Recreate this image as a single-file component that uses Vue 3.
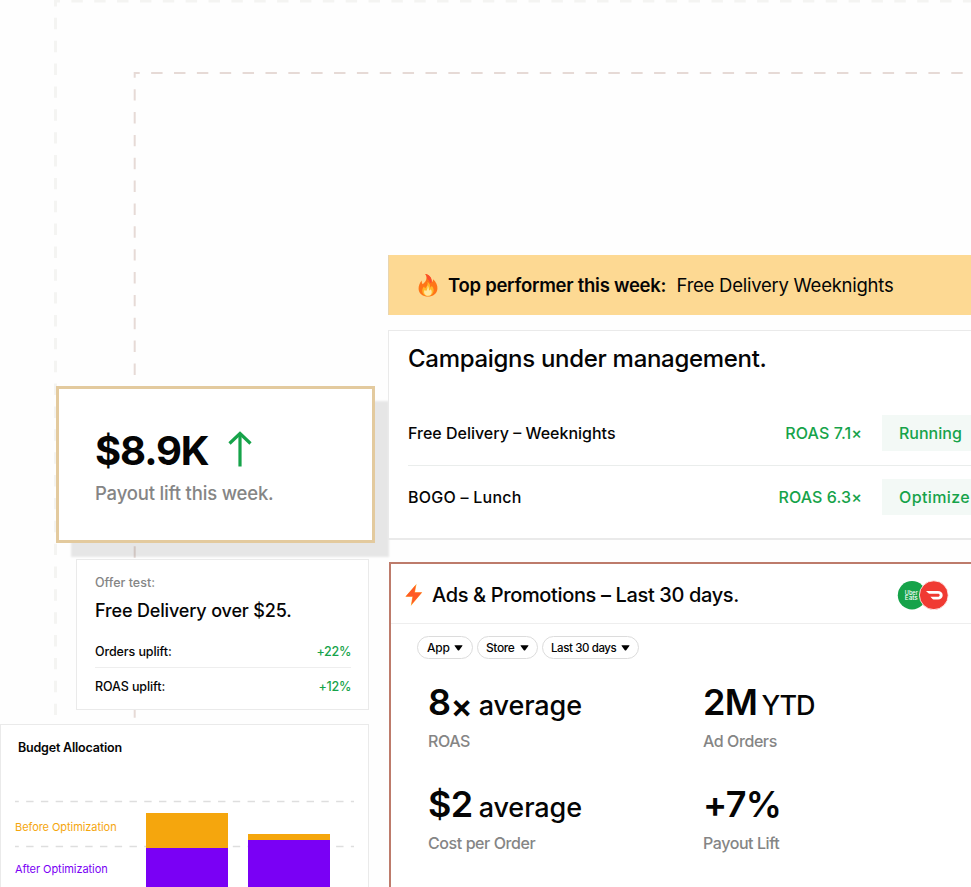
<template>
  <div class="page">
    <svg class="frames" width="971" height="887" viewBox="0 0 971 887" fill="none">
      <g stroke="#F4F4F2" stroke-width="3" stroke-dasharray="11.43 11.43" stroke-dashoffset="5.5">
        <path d="M55.5 0.5V887" />
        <path d="M54 1H971" />
      </g>
      <g stroke="#E6DAD6" stroke-width="2" stroke-dasharray="11.43 11.43" stroke-dashoffset="5.7">
        <path d="M134.7 72V887" />
        <path d="M134 73H971" />
      </g>
    </svg>

    <div class="left-column">
      <section class="payout-card">
        <div class="payout-row">
          <span class="payout-value">$8.9K</span>
          <svg class="payout-arrow" width="24" height="36" viewBox="0 0 24 36" fill="none" stroke="#16A34A" stroke-width="3.2">
            <path d="M12 35.5V3" />
            <path d="M1.5 12.5L12 2.5L22.5 12.5" />
          </svg>
        </div>
        <div class="payout-label">Payout lift this week.</div>
      </section>

      <section class="offer-card">
        <div class="offer-label">Offer test:</div>
        <div class="offer-title">Free Delivery over $25.</div>
        <div v-for="item in uplifts" :key="item.label" class="uplift-row">
          <span class="uplift-label">{{ item.label }}</span>
          <span class="uplift-value">{{ item.value }}</span>
        </div>
      </section>

      <section class="budget-card">
        <div class="budget-title">Budget Allocation</div>
        <div class="chart">
          <svg class="chart-lines" width="339" height="86" viewBox="0 0 339 86" stroke="#DEDEDE" stroke-width="1.3" stroke-dasharray="7.4 7.36" stroke-dashoffset="3.6">
            <path d="M0 1.5H339" />
            <path d="M0 46.5H339" />
          </svg>
          <div class="legend">
            <span class="legend-before">Before Optimization</span>
            <span class="legend-after">After Optimization</span>
          </div>
          <div class="bars">
            <div v-for="(bar, i) in bars" :key="i" class="bar" :style="{ height: bar.total + 'px' }">
              <div class="bar-before" :style="{ height: bar.before + 'px' }"></div>
              <div class="bar-after"></div>
            </div>
          </div>
        </div>
      </section>
    </div>

    <div class="right-column">
      <section class="banner">
        <svg class="flame" width="20" height="24" viewBox="0 0 20 24">
          <path fill="#FF7518" d="M7.2 1C10.8 1.4 14 4.4 13.8 9.2C14.7 8.6 15 7.5 15 6.2C18 8.6 19.8 12.4 19.4 16C18.9 20.7 15 23.6 10 23.6C4.9 23.6 .9 20.6 .6 16C.4 12.6 1.8 9.7 3.7 7.4C3.7 9 4 10.3 4.7 11.2C7.6 9.2 10 5.2 7.2 1Z" />
          <path fill="#FA4E2C" d="M7.2 1C10.8 1.4 14 4.4 13.8 9.2C13 10.2 12 10 11.7 9C11.4 7 10.3 6.2 9.2 6.2C9.3 4.2 8.8 2.5 7.2 1Z" />
          <path fill="#FFB72B" d="M9.5 8.8C12 11 12.4 13 12.1 14.5C13.1 14.2 13.5 13.5 13.7 12.8C16 15 16.2 18 14.8 20.3C13.6 22.3 12 23.2 9.9 23.2C6.7 23.2 4.3 20.9 4.3 17.8C4.3 15.9 5 14.4 6.1 13.4C6.3 14.3 6.6 14.8 7.2 15.2C9.2 13.5 10 11.5 9.5 8.8Z" />
          <path fill="#FFE7A0" d="M9.6 12.4C11 14.2 10.9 16.2 11.1 17.4C11.9 17.3 12.4 16.9 12.8 16.2C14.2 18 14 20.4 12.8 21.7C11.4 23.2 8.4 23.2 7 21.6C5.6 20 5.9 17.8 6.9 16.8C7.1 17.5 7.5 17.9 8.1 18C9.3 16.5 9.8 14.7 9.6 12.4Z" />
        </svg>
        <strong class="banner-title">Top performer this week:</strong>
        <span class="banner-text">Free Delivery Weeknights</span>
      </section>

      <section class="campaigns">
        <h2 class="campaigns-title">Campaigns under management.</h2>
        <div v-for="item in campaigns" :key="item.name" class="campaign-row">
          <span class="campaign-name" :class="item.key">{{ item.name }}</span>
          <span class="campaign-roas">ROAS {{ item.roas }}<span class="times">×</span></span>
          <span class="campaign-status" :class="'status-' + item.key">{{ item.status }}</span>
        </div>
      </section>

      <section class="ads">
        <header class="ads-header">
          <svg class="bolt" width="18" height="24" viewBox="0 0 18 24">
            <path fill="#FFB03A" d="M11.6 .8L.3 13.7H7.3L5.8 23L17.3 9.3H10Z" />
            <path fill="#FF5A26" d="M10.7 2L.7 13.5H7.9L6.5 21.6L16.9 9.6H9.5Z" />
          </svg>
          <h2 class="ads-title">Ads &amp; Promotions – Last 30 days.</h2>
          <svg class="brands" width="52" height="30" viewBox="0 0 52 30">
            <circle cx="15" cy="15.2" r="14.2" fill="#16A34A" />
            <text x="7.8" y="14.6" class="brand-text" textLength="13" lengthAdjust="spacingAndGlyphs">Uber</text>
            <text x="7.8" y="20.4" class="brand-text" textLength="13" lengthAdjust="spacingAndGlyphs">Eats</text>
            <circle cx="36.8" cy="15.2" r="14.4" fill="#F03A32" stroke="#FFF" stroke-width="0.8" />
            <path fill="#FFF" d="M29 11H40.7C43.9 11 45.7 12.9 45.7 15.2C45.7 17.7 43.7 19.5 41.1 19.5H36.5C36.1 19.5 35.7 19.3 35.5 19L33.4 16.7H41C42 16.7 42.7 16.1 42.7 15.2C42.7 14.4 42 13.8 41 13.8H32.7C32.2 13.8 31.7 13.6 31.4 13.3Z" />
          </svg>
        </header>
        <div class="filters">
          <button v-for="item in filters" :key="item.label" class="filter" :class="item.key">
            {{ item.label }}
            <svg class="caret" width="9" height="6" viewBox="0 0 9 6"><path d="M1 .2H8Q9 .2 8.3 1.1L5.2 5.2Q4.5 6 3.8 5.2L.7 1.1Q0 .2 1 .2Z" /></svg>
          </button>
        </div>
        <div class="stats">
          <div v-for="item in stats" :key="item.label" class="stat">
            <div class="stat-value">
              <span class="stat-number">{{ item.value }}<span v-if="item.times" class="stat-times">×</span></span>
              <span v-if="item.unit" class="stat-unit" :class="item.unit.toLowerCase()">{{ item.unit }}</span>
            </div>
            <div class="stat-label">{{ item.label }}</div>
          </div>
        </div>
      </section>
    </div>
  </div>
</template>

<script setup>
const uplifts = [
  { label: 'Orders uplift:', value: '+22%' },
  { label: 'ROAS uplift:', value: '+12%' }
]

const bars = [
  { total: 74, before: 34.5 },
  { total: 53, before: 6 }
]

const campaigns = [
  { key: 'weeknights', name: 'Free Delivery – Weeknights', roas: '7.1', status: 'Running' },
  { key: 'lunch', name: 'BOGO – Lunch', roas: '6.3', status: 'Optimize' }
]

const filters = [
  { key: 'app', label: 'App' },
  { key: 'store', label: 'Store' },
  { key: 'days', label: 'Last 30 days' }
]

const stats = [
  { value: '8', times: true, unit: 'average', label: 'ROAS' },
  { value: '2M', unit: 'YTD', label: 'Ad Orders' },
  { value: '$2', unit: 'average', label: 'Cost per Order' },
  { value: '+7%', label: 'Payout Lift' }
]
</script>

<style>
body { background: #FEFEFE; overflow: hidden; }
</style>

<style scoped>
.page { position: relative; display: grid; grid-template-columns: 388px 1fr; width: 100%; height: 887px; overflow: hidden; font-family: 'Inter', sans-serif; font-weight: 500; color: #050505; }
.page * { box-sizing: border-box; }
h2 { margin: 0; font-weight: 500; }
span, h2, strong { white-space: nowrap; }
svg { flex-shrink: 0; }
.frames { position: absolute; left: 0; top: 0; }

.left-column, .right-column { position: relative; display: flex; flex-direction: column; min-width: 0; }
.left-column { padding-top: 386px; align-items: flex-start; }
.right-column { padding-top: 255px; }

.payout-card { width: 319px; height: 157px; margin-left: 56px; padding: 36px 0 0 36px; background: #FFF; border: 3px solid #E3CA9E; box-shadow: 14px 14px 2px -0.5px rgba(0, 0, 0, 0.095); }
.payout-row { display: flex; align-items: flex-start; height: 50px; }
.payout-value { width: 133px; line-height: 51px; font-size: 40px; font-weight: 650; letter-spacing: -1.1px; }
.payout-arrow { margin-top: 6px; }
.payout-label { margin-top: 6px; line-height: 24px; font-size: 18.5px; color: #858585; letter-spacing: -0.18px; }

.offer-card { width: 293px; height: 151px; margin: 16px 0 0 76px; padding: 14px 17px 0 18px; background: #FFF; border: 1px solid #EAEAEA; }
.offer-label { line-height: 18px; font-size: 12.5px; color: #858585; }
.offer-title { margin: 6px 0 12px; line-height: 26px; font-size: 18px; letter-spacing: -0.15px; }
.uplift-row { display: flex; justify-content: space-between; height: 31px; line-height: 31px; font-size: 12.5px; letter-spacing: -0.1px; }
.uplift-row + .uplift-row { height: 38px; border-top: 1px solid #EEEEEE; line-height: 37px; }
.uplift-value { color: #16A34A; letter-spacing: -0.3px; }

.budget-card { width: 369px; height: 170px; margin-top: 14px; padding: 14px 14px 0; background: #FFF; border: 1px solid #EAEAEA; }
.budget-title { padding-left: 3px; line-height: 18px; font-size: 12.5px; font-weight: 600; letter-spacing: -0.2px; }
.chart { position: relative; display: flex; height: 87px; margin-top: 43px; }
.chart-lines { position: absolute; left: 0; top: 0; }
.legend { display: flex; flex-direction: column; gap: 26px; width: 130.5px; padding-top: 19px; line-height: 16px; font-size: 11px; font-weight: 400; letter-spacing: -0.06px; }
.legend-before { color: #F5A60D; }
.legend-after { color: #7A00F5; }
.bars { position: relative; display: flex; align-items: flex-end; gap: 19.5px; }
.bar { display: flex; flex-direction: column; width: 82.5px; }
.bar-before { background: #F5A60D; }
.bar-after { flex: 1; background: #7A00F5; }

.banner { display: flex; align-items: center; height: 60px; padding-left: 29px; border-left: 1px solid #E8D5B0; background: #FDD993; font-size: 18.5px; }
.banner-title { width: 228.5px; margin-left: 10px; font-weight: 600; letter-spacing: -0.27px; }
.banner-text { font-weight: 400; letter-spacing: -0.25px; }

.campaigns { height: 210px; margin-top: 15px; padding: 13px 0 0 19px; background: #FFF; border: solid #EAEAEA; border-width: 1px 0 2px 1px; }
.campaigns-title { height: 58px; line-height: 30px; font-size: 24px; letter-spacing: -0.3px; }
.campaign-row { display: flex; align-items: center; height: 63px; padding-bottom: 1px; font-size: 16px; }
.campaign-row + .campaign-row { height: 64px; border-top: 1px solid #EAEDEC; }
.campaign-name { flex: 1; }
.lunch { letter-spacing: 0.25px; }
.campaign-roas { color: #16A34A; letter-spacing: 0.1px; }
.times { font-size: 16px; }
.campaign-status { width: 120px; height: 36px; margin: 0 -31px 0 20px; padding-left: 17px; background: #F3F9F6; line-height: 37px; color: #16A34A; }
.status-lunch { letter-spacing: 0.4px; }

.ads { flex: 1; margin: 22px 0 0 1px; background: #FFF; border: solid #BD7B6B; border-width: 2px 0 0 2px; }
.ads-header { display: flex; align-items: center; height: 60px; padding: 2px 22px 0 14px; border-bottom: 1px solid #EEEEEE; }
.ads-title { flex: 1; margin-left: 9px; padding-top: 1px; font-size: 20px; letter-spacing: -0.36px; }
.brand-text { fill: #FFF; font-family: 'Inter', sans-serif; font-size: 6px; }
.filters { display: flex; gap: 4px; padding: 12px 0 0 26px; }
.filter { display: flex; align-items: center; justify-content: space-between; height: 23px; padding: 0 9px; border: 1px solid #DCDCDC; border-radius: 12px; background: #FFF; font: 500 12px 'Inter', sans-serif; letter-spacing: -0.2px; white-space: nowrap; color: #050505; }
.app { width: 56px; }
.store { width: 61px; padding: 0 8px; letter-spacing: -0.4px; }
.days { width: 97px; padding: 0 8px; font-size: 11.5px; letter-spacing: -0.4px; }
.stats { display: grid; grid-template-columns: 275px 275px; grid-auto-rows: 102px; padding: 20px 0 0 37px; }
.stat-value { display: flex; align-items: baseline; gap: 6px; height: 50px; line-height: 46px; }
.stat-number { font-size: 36px; font-weight: 570; letter-spacing: -0.6px; }
.stat-times { position: relative; top: 3px; font-size: 33px; font-weight: 600; letter-spacing: 0; }
.stat-unit { font-size: 27px; letter-spacing: -0.1px; }
.ytd { margin-left: -2px; letter-spacing: -1.2px; }
.stat-label { line-height: 24px; font-size: 16px; color: #858585; letter-spacing: -0.42px; }
</style>
